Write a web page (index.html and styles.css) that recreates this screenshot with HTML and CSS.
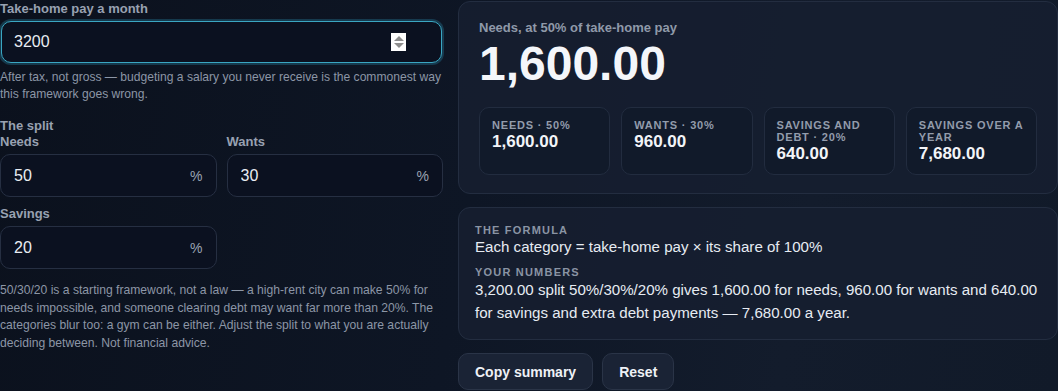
FILE: index.html
```html
<!DOCTYPE html>
<html lang="en">
  <head>
    <meta charset="UTF-8" />
    <meta name="viewport" content="width=device-width, initial-scale=1.0" />
    <title>50/30/20 budget</title>
    <link rel="stylesheet" href="styles.css">
  </head>
  <body>
    <main class="app">
      <section class="inputs">
        <label class="label" for="pay">Take-home pay a month</label>
        <div class="field field-focus">
          <input id="pay" class="field-input" type="text" value="3200" />
          <span class="spinner"><i class="up"></i><i class="down"></i></span>
        </div>
        <p class="help">After tax, not gross — budgeting a salary you never receive is the commonest way this framework goes wrong.</p>

        <div class="split">
          <div class="label">The split</div>
          <div class="split-grid">
            <div class="split-item">
              <label class="label" for="needs">Needs</label>
              <div class="field">
                <input id="needs" class="field-input" type="text" value="50" />
                <span class="unit">%</span>
              </div>
            </div>
            <div class="split-item">
              <label class="label" for="wants">Wants</label>
              <div class="field">
                <input id="wants" class="field-input" type="text" value="30" />
                <span class="unit">%</span>
              </div>
            </div>
            <div class="split-item">
              <label class="label" for="savings">Savings</label>
              <div class="field">
                <input id="savings" class="field-input" type="text" value="20" />
                <span class="unit">%</span>
              </div>
            </div>
          </div>
        </div>

        <p class="note">50/30/20 is a starting framework, not a law — a high-rent city can make 50% for needs impossible, and someone clearing debt may want far more than 20%. The categories blur too: a gym can be either. Adjust the split to what you are actually deciding between. Not financial advice.</p>
      </section>

      <aside class="results">
        <div class="panel hero">
          <div class="hero-label">Needs, at 50% of take-home pay</div>
          <div class="hero-value">1,600.00</div>
          <div class="stats">
            <div class="stat">
              <div class="stat-label">Needs · 50%</div>
              <div class="stat-value">1,600.00</div>
            </div>
            <div class="stat">
              <div class="stat-label">Wants · 30%</div>
              <div class="stat-value">960.00</div>
            </div>
            <div class="stat">
              <div class="stat-label">Savings and debt · 20%</div>
              <div class="stat-value">640.00</div>
            </div>
            <div class="stat">
              <div class="stat-label">Savings over a year</div>
              <div class="stat-value">7,680.00</div>
            </div>
          </div>
        </div>

        <div class="panel formula">
          <div class="kicker">The formula</div>
          <p class="formula-text">Each category = take-home pay × its share of 100%</p>
          <div class="kicker">Your numbers</div>
          <p class="numbers-text">3,200.00 split 50%/30%/20% gives 1,600.00 for needs, 960.00 for wants and 640.00 for savings and extra debt payments — 7,680.00 a year.</p>
        </div>

        <div class="actions">
          <button class="btn">Copy summary</button>
          <button class="btn">Reset</button>
        </div>
      </aside>
    </main>
  </body>
</html>
```

FILE: styles.css
```css
body {
    font-family: "Liberation Sans", Arial, sans-serif;
    background: linear-gradient(100deg, #0b111d 0%, #0e1625 45%, #131c2c 75%, #111a29 100%);
    color: #e6ebf2;
    margin: 0;
    padding: 0;
    height: 391px;
    overflow: hidden;
}
.app {
    display: grid;
    grid-template-columns: 443px minmax(0, 1fr);
    gap: 15px;
    padding-top: 1px;
}
.label {
    display: block;
    font-size: 13px;
    font-weight: bold;
    line-height: 16px;
    color: #98a1b1;
}
.field {
    position: relative;
    display: flex;
    align-items: center;
    height: 43px;
    box-sizing: border-box;
    margin-top: 4px;
    background-color: #0b1120;
    border: 1px solid #262f42;
    border-radius: 10px;
    padding: 0 13px;
}
.field-focus {
    height: 42px;
    border-color: #3aa6c2;
    box-shadow: 0 0 0 2px rgba(40, 130, 160, 0.35);
    margin-left: 1px;
    margin-right: 1px;
    padding-left: 12px;
}
.field-input {
    flex: 1;
    width: 0;
    min-width: 0;
    background: transparent;
    border: none;
    outline: none;
    padding: 0;
    font-family: inherit;
    font-size: 16px;
    color: #e9edf3;
}
.unit {
    font-size: 14px;
    color: #9aa3b2;
}
.spinner {
    position: absolute;
    left: 389px;
    top: 11px;
    width: 15px;
    height: 18px;
    background-color: #fff;
}
.spinner i {
    position: absolute;
    left: 3px;
    width: 0;
    height: 0;
    border-left: 5px solid transparent;
    border-right: 5px solid transparent;
}
.spinner .up {
    top: 3px;
    border-bottom: 5px solid #8e8e8e;
}
.spinner .down {
    bottom: 3px;
    border-top: 5px solid #8e8e8e;
}
.help {
    margin: 6px 0 0;
    font-size: 12.1px;
    line-height: 17px;
    color: #8c96a6;
}
.split {
    margin-top: 15px;
}
.split-grid {
    display: grid;
    grid-template-columns: minmax(0, 1fr) minmax(0, 1fr);
    column-gap: 10px;
    row-gap: 9px;
}
.note {
    margin: 13px 0 0;
    font-size: 12.15px;
    line-height: 17.5px;
    color: #8c96a6;
}

.results {
    display: flex;
    flex-direction: column;
    gap: 13px;
}
.panel {
    background-color: rgba(22, 31, 48, 0.85);
    border: 1px solid #232d40;
    border-radius: 12px;
}
.hero {
    padding: 18px 20px 18px;
}
.hero-label {
    font-size: 13px;
    font-weight: bold;
    line-height: 16px;
    color: #8f99a9;
}
.hero-value {
    font-size: 48px;
    font-weight: bold;
    line-height: 53px;
    margin-top: 1px;
    color: #f4f6fa;
}
.stats {
    display: grid;
    grid-template-columns: repeat(4, minmax(0, 1fr));
    gap: 11px;
    margin-top: 17px;
}
.stat {
    background-color: #111a2a;
    border: 1px solid #222c3f;
    border-radius: 10px;
    padding: 11px 11px 10px 12px;
}
.stat-label {
    font-size: 11px;
    font-weight: bold;
    line-height: 12px;
    letter-spacing: 0.8px;
    text-transform: uppercase;
    color: #939cac;
}
.stat-value {
    font-size: 17px;
    font-weight: bold;
    line-height: 20px;
    margin-top: 1px;
    color: #f2f4f8;
}
.formula {
    padding: 15px 15px 15px 16px;
}
.kicker {
    font-size: 11px;
    font-weight: bold;
    line-height: 14px;
    letter-spacing: 1.2px;
    text-transform: uppercase;
    color: #8a94a4;
}
.formula-text {
    margin: 0 0 9px;
    font-size: 15.1px;
    line-height: 19px;
    color: #e6ebf2;
}
.numbers-text {
    margin: -1px 0 0;
    font-size: 15.1px;
    line-height: 23px;
    color: #e6ebf2;
}
.actions {
    display: flex;
    gap: 9px;
}
.btn {
    font-family: inherit;
    font-size: 14px;
    font-weight: bold;
    color: #eef1f6;
    background-color: #1a2335;
    border: 1px solid #2a3447;
    border-radius: 10px;
    height: 37px;
    padding: 0 16px;
}
```
